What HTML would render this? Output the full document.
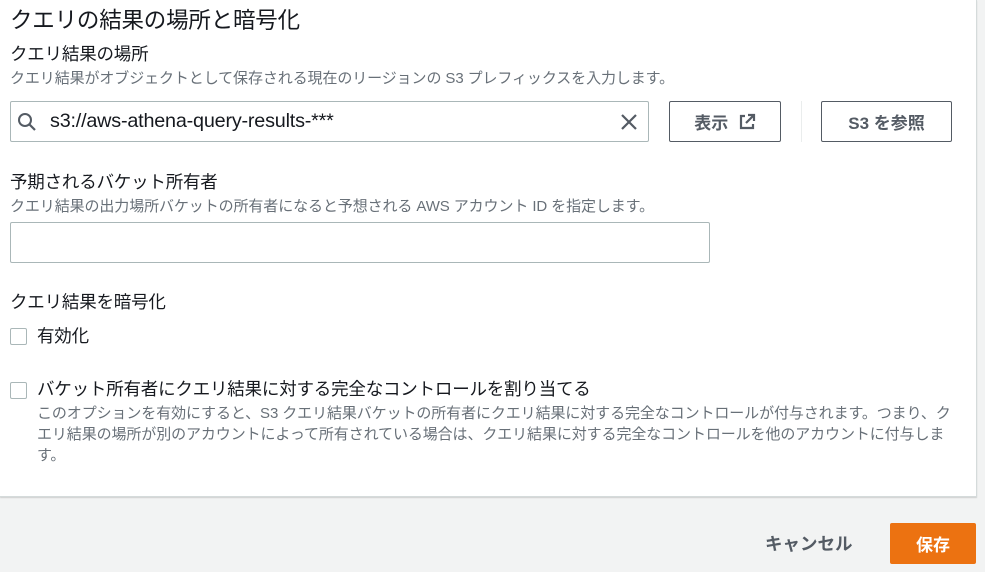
<!DOCTYPE html>
<html><head><meta charset="utf-8"><style>
*{margin:0;padding:0;box-sizing:border-box}
body{width:985px;height:572px;background:#f2f3f3;position:relative;overflow:hidden;font-family:"Liberation Sans","Noto Sans CJK JP",sans-serif;color:#16191f}
.panel{position:absolute;left:0;top:0;width:977px;height:497px;background:#fff;border-right:1px solid #d5dbdb;border-bottom:1px solid #d5dbdb;box-shadow:0 1px 1px rgba(0,0,0,.15)}
.a{position:absolute;white-space:nowrap}
.t{left:10px;top:3px;font-size:22.5px;letter-spacing:-0.2px}
.l{font-size:17.5px;letter-spacing:-0.2px}
.d{font-size:15px;color:#687078;letter-spacing:-0.1px}
.box{position:absolute;border:1px solid #aab7b8;border-radius:2px;background:#fff}
.btn{position:absolute;border:1px solid #545b64;border-radius:2px;background:#fff;font-weight:bold;font-size:17px;color:#545b64;display:flex;align-items:center;justify-content:center}
.cb{position:absolute;left:10px;width:17px;height:17px;border:1px solid #aab7b8;border-radius:2px;background:#fff}
</style></head><body>
<div class="panel"></div>
<div class="a t">クエリの結果の場所と暗号化</div>
<div class="a l" style="left:10px;top:41px">クエリ結果の場所</div>
<div class="a d" style="left:10px;top:67px">クエリ結果がオブジェクトとして保存される現在のリージョンの S3 プレフィックスを入力します。</div>
<div class="box" style="left:10px;top:101px;width:639px;height:41px"></div>
<svg class="a" style="left:16px;top:111px" width="22" height="22" viewBox="0 0 22 22"><circle cx="9" cy="9" r="6" fill="none" stroke="#545b64" stroke-width="2"/><path d="M13.5 13.5L19 19" stroke="#545b64" stroke-width="2.2"/></svg>
<div class="a" style="left:50px;top:110px;font-size:19.8px;letter-spacing:-0.2px">s3://aws-athena-query-results-***</div>
<svg class="a" style="left:619px;top:112px" width="20" height="20" viewBox="0 0 20 20"><path d="M3 3L17 17M17 3L3 17" stroke="#545b64" stroke-width="2.2"/></svg>
<div class="btn" style="left:669px;top:101px;width:112px;height:41px">表示&nbsp;&nbsp;<svg width="18" height="18" viewBox="0 0 18 18"><path d="M7 3H3v12h12v-4" fill="none" stroke="#545b64" stroke-width="2.2"/><path d="M10 2h6v6M16 2L8 10" fill="none" stroke="#545b64" stroke-width="2.2"/></svg></div>
<div class="a" style="left:801px;top:101px;width:1px;height:41px;background:#eaeded"></div>
<div class="btn" style="left:821px;top:101px;width:131px;height:41px">S3 を参照</div>
<div class="a l" style="left:10px;top:169px">予期されるバケット所有者</div>
<div class="a d" style="left:10px;top:195px">クエリ結果の出力場所バケットの所有者になると予想される AWS アカウント ID を指定します。</div>
<div class="box" style="left:10px;top:222px;width:700px;height:41px"></div>
<div class="a l" style="left:10px;top:289px">クエリ結果を暗号化</div>
<div class="cb" style="top:328px"></div>
<div class="a l" style="left:37px;top:323px">有効化</div>
<div class="cb" style="top:382px"></div>
<div class="a l" style="left:37px;top:376px">バケット所有者にクエリ結果に対する完全なコントロールを割り当てる</div>
<div class="a d" style="left:37px;top:403px;line-height:21px;white-space:normal;width:920px">このオプションを有効にすると、S3 クエリ結果バケットの所有者にクエリ結果に対する完全なコントロールが付与されます。つまり、クエリ結果の場所が別のアカウントによって所有されている場合は、クエリ結果に対する完全なコントロールを他のアカウントに付与します。</div>
<div class="a" style="left:765px;top:531px;font-size:17.5px;font-weight:bold;color:#545b64">キャンセル</div>
<div class="btn" style="left:890px;top:523px;width:86px;height:41px;background:#ec7211;border-color:#ec7211;color:#fff">保存</div>
</body></html>
